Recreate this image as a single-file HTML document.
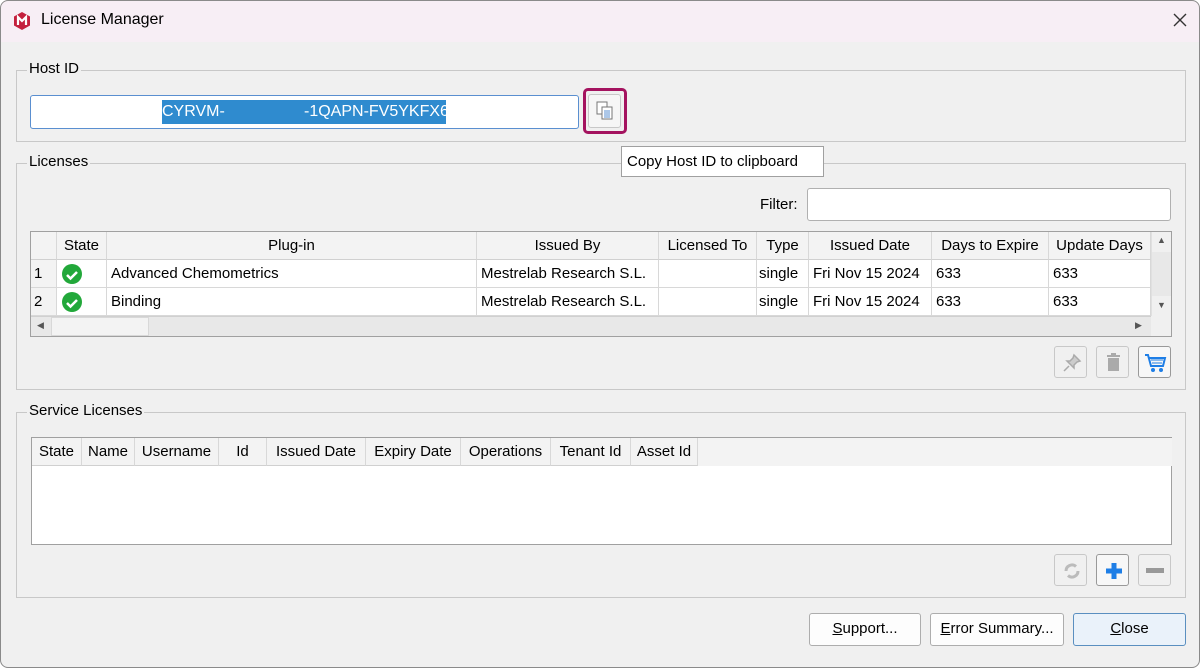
<!DOCTYPE html>
<html><head><style>
*{box-sizing:border-box;margin:0;padding:0}
body{width:1200px;height:668px;background:#fff;font-family:"Liberation Sans",sans-serif;font-size:15px;color:#000;position:relative;overflow:hidden}
.win{position:absolute;left:0;top:0;width:1200px;height:668px;background:#f0f0f0;overflow:hidden;border-radius:8px}
.frame{position:absolute;left:0;top:0;width:1200px;height:668px;border:1px solid #8a8a8a;border-radius:8px;pointer-events:none}
.title{position:absolute;left:0;top:0;width:1200px;height:42px;background:#f7eef5}
.a{position:absolute;white-space:nowrap}
.grp{position:absolute;border:1px solid #c8c8c8}
.lbl{position:absolute;background:#f0f0f0;padding:0 2px;font-size:15px;top:-11px;left:10px}
.tbl{position:absolute;background:#fff;border:1px solid #a0a0a0}
.hd{position:absolute;top:0;height:28px;background:#f3f3f3;border-right:1px solid #d8d8d8;border-bottom:1px solid #d0d0d0;text-align:center;line-height:28px}
.cell{position:absolute;height:28px;line-height:28px;border-right:1px solid #d8d8d8;border-bottom:1px solid #d8d8d8;padding-left:4px}
.btn{position:absolute;border:1px solid #c8c8c8;border-radius:3px;background:#f0f0f0}
.pb{position:absolute;border:1px solid #adadad;border-radius:3px;background:#fdfdfd;text-align:center;line-height:30px;font-size:15px}
.ok{display:inline-block;width:20px;height:20px;border-radius:50%;background:#22a83a;position:absolute;left:5px;top:4px}
</style></head><body>
<div class="win">
<div class="title"></div>
<svg class="a" style="left:12px;top:11px" width="20" height="20" viewBox="0 0 20 20"><path d="M10 1 L18 5.5 V14.5 L10 19 L2 14.5 V5.5Z" fill="#c4203e"/><path d="M6 14 V6 L10 10 L14 6 V14" stroke="#fff" stroke-width="2.2" fill="none"/></svg>
<div class="a" style="left:41px;top:11px;font-size:16px">License Manager</div>
<svg class="a" style="left:1172px;top:12px" width="16" height="16"><path d="M2 2L14 14M14 2L2 14" stroke="#333" stroke-width="1.4"/></svg>

<div class="grp" style="left:16px;top:70px;width:1170px;height:72px"><div class="lbl">Host ID</div></div>
<div class="a" style="left:30px;top:95px;width:549px;height:34px;background:#fff;border:1px solid #5a8fd0;border-radius:3px"></div>
<div class="a" style="left:162px;top:100px;width:284px;height:24px;background:#2f8bcf;color:#fff;line-height:24px;font-size:16px;overflow:hidden">CYRVM-<span style="position:absolute;left:142px">-1QAPN-FV5YKFX6</span></div>
<div class="a" style="left:583px;top:88px;width:44px;height:46px;border:3px solid #a4135f;border-radius:5px"></div>
<div class="btn" style="left:588px;top:94px;width:33px;height:34px;background:#f6f6f6"></div>
<svg class="a" style="left:595px;top:100px" width="20" height="22"><rect x="2" y="2" width="10" height="12" fill="#fff" stroke="#777"/><rect x="7" y="7" width="10" height="12" fill="#fff" stroke="#777"/><path d="M9 11h6M9 13h6M9 15h6M9 17h6" stroke="#5a8fd0"/></svg>

<div class="grp" style="left:16px;top:163px;width:1170px;height:227px"><div class="lbl">Licenses</div></div>
<div class="a" style="left:621px;top:146px;width:203px;height:31px;background:#fff;border:1px solid #a0a0a0;line-height:29px;padding-left:5px;font-size:15px">Copy Host ID to clipboard</div>
<div class="a" style="left:760px;top:196px">Filter:</div>
<div class="a" style="left:807px;top:188px;width:364px;height:33px;background:#fff;border:1px solid #b0b0b0;border-radius:3px"></div>

<div class="tbl" style="left:30px;top:231px;width:1142px;height:106px">
<div class="hd" style="left:0;width:26px"></div>
<div class="hd" style="left:26px;width:50px">State</div>
<div class="hd" style="left:76px;width:370px">Plug-in</div>
<div class="hd" style="left:446px;width:182px">Issued By</div>
<div class="hd" style="left:628px;width:98px">Licensed To</div>
<div class="hd" style="left:726px;width:52px">Type</div>
<div class="hd" style="left:778px;width:123px">Issued Date</div>
<div class="hd" style="left:901px;width:117px">Days to Expire</div>
<div class="hd" style="left:1018px;width:102px">Update Days</div>
<div class="cell" style="left:0;top:28px;width:26px;background:#f3f3f3;padding-left:3px">1</div>
<div class="cell" style="left:26px;top:28px;width:50px"><span class="ok"></span><svg class="a" style="left:9px;top:9px" width="12" height="12"><path d="M1 6l3.5 3.5L11 3" stroke="#fff" stroke-width="2.5" fill="none"/></svg></div>
<div class="cell" style="left:76px;top:28px;width:370px">Advanced Chemometrics</div>
<div class="cell" style="left:446px;top:28px;width:182px">Mestrelab Research S.L.</div>
<div class="cell" style="left:628px;top:28px;width:98px"></div>
<div class="cell" style="left:726px;top:28px;width:52px;padding-left:2px">single</div>
<div class="cell" style="left:778px;top:28px;width:123px">Fri Nov 15 2024</div>
<div class="cell" style="left:901px;top:28px;width:117px">633</div>
<div class="cell" style="left:1018px;top:28px;width:102px">633</div>
<div class="cell" style="left:0;top:56px;width:26px;background:#f3f3f3;padding-left:3px">2</div>
<div class="cell" style="left:26px;top:56px;width:50px"><span class="ok"></span><svg class="a" style="left:9px;top:9px" width="12" height="12"><path d="M1 6l3.5 3.5L11 3" stroke="#fff" stroke-width="2.5" fill="none"/></svg></div>
<div class="cell" style="left:76px;top:56px;width:370px">Binding</div>
<div class="cell" style="left:446px;top:56px;width:182px">Mestrelab Research S.L.</div>
<div class="cell" style="left:628px;top:56px;width:98px"></div>
<div class="cell" style="left:726px;top:56px;width:52px;padding-left:2px">single</div>
<div class="cell" style="left:778px;top:56px;width:123px">Fri Nov 15 2024</div>
<div class="cell" style="left:901px;top:56px;width:117px">633</div>
<div class="cell" style="left:1018px;top:56px;width:102px">633</div>
<div class="a" style="left:1120px;top:0;width:20px;height:84px;background:#f0f0f0;border-left:1px solid #e0e0e0"><div class="a" style="left:0;top:20px;width:19px;height:44px;background:#e8e8e8"></div><div class="a" style="left:5px;top:3px;font-size:9px;color:#555">▲</div><div class="a" style="left:5px;top:68px;font-size:9px;color:#555">▼</div></div>
<div class="a" style="left:0;top:84px;width:1120px;height:20px;background:#e8e8e8;border-top:1px solid #d0d0d0"><div class="a" style="left:20px;top:0;width:98px;height:19px;background:#f3f3f3;border:1px solid #d8d8d8"></div><div class="a" style="left:6px;top:3px;font-size:9px;color:#555">◀</div><div class="a" style="left:1104px;top:3px;font-size:9px;color:#555">▶</div></div>
<div class="a" style="left:1120px;top:84px;width:20px;height:20px;background:#f0f0f0"></div>
</div>
<div class="btn" style="left:1054px;top:346px;width:33px;height:32px"><svg class="a" style="left:7px;top:6px" width="20" height="20"><path d="M12 2l6 6-3 1-3 3 0 3-7-7 3 0 3-3z M7 13l-5 5" stroke="#aaa" stroke-width="1.5" fill="#ccc"/></svg></div>
<div class="btn" style="left:1096px;top:346px;width:33px;height:32px"><svg class="a" style="left:9px;top:6px" width="16" height="20"><rect x="1" y="2" width="13" height="2" fill="#aaa"/><rect x="5" y="0" width="5" height="2" fill="#aaa"/><rect x="2" y="5" width="11" height="13" fill="#aaa"/></svg></div>
<div class="btn" style="left:1138px;top:346px;width:33px;height:32px;border-color:#999;background:#f7f7f7"><svg class="a" style="left:5px;top:6px" width="24" height="20"><path d="M1 2h3l3 11h12l2-8H5" stroke="#1e7ee6" stroke-width="2" fill="none"/><path d="M7 7h12M8 10h10" stroke="#1e7ee6"/><circle cx="9" cy="17" r="2" fill="#1e7ee6"/><circle cx="17" cy="17" r="2" fill="#1e7ee6"/></svg></div>

<div class="grp" style="left:16px;top:412px;width:1170px;height:186px"><div class="lbl">Service Licenses</div></div>
<div class="tbl" style="left:31px;top:437px;width:1141px;height:108px">
<div class="hd" style="left:0;width:50px">State</div>
<div class="hd" style="left:50px;width:53px">Name</div>
<div class="hd" style="left:103px;width:84px">Username</div>
<div class="hd" style="left:187px;width:48px">Id</div>
<div class="hd" style="left:235px;width:99px">Issued Date</div>
<div class="hd" style="left:334px;width:95px">Expiry Date</div>
<div class="hd" style="left:429px;width:90px">Operations</div>
<div class="hd" style="left:519px;width:80px">Tenant Id</div>
<div class="hd" style="left:599px;width:67px">Asset Id</div>
<div class="a" style="left:666px;top:0;width:474px;height:28px;background:#f3f3f3"></div>
</div>
<div class="btn" style="left:1054px;top:554px;width:33px;height:32px"><svg class="a" style="left:7px;top:6px" width="20" height="20"><path d="M4 10a6 6 0 0 1 10-4.5M16 10a6 6 0 0 1-10 4.5" stroke="#bbb" stroke-width="3" fill="none"/></svg></div>
<div class="btn" style="left:1096px;top:554px;width:33px;height:32px;border-color:#999;background:#f7f7f7"><svg class="a" style="left:7px;top:6px" width="20" height="20"><path d="M10 2v16M2 10h16" stroke="#1e7ee6" stroke-width="5"/></svg></div>
<div class="btn" style="left:1138px;top:554px;width:33px;height:32px"><div class="a" style="left:7px;top:13px;width:18px;height:5px;background:#999"></div></div>

<div class="pb" style="left:809px;top:613px;width:112px;height:33px"><u>S</u>upport...</div>
<div class="pb" style="left:930px;top:613px;width:134px;height:33px"><u>E</u>rror Summary...</div>
<div class="pb" style="left:1073px;top:613px;width:113px;height:33px;border-color:#5a8fc0;background:#eaf2fa"><u>C</u>lose</div>
</div>
<div class="frame"></div>
</body></html>
